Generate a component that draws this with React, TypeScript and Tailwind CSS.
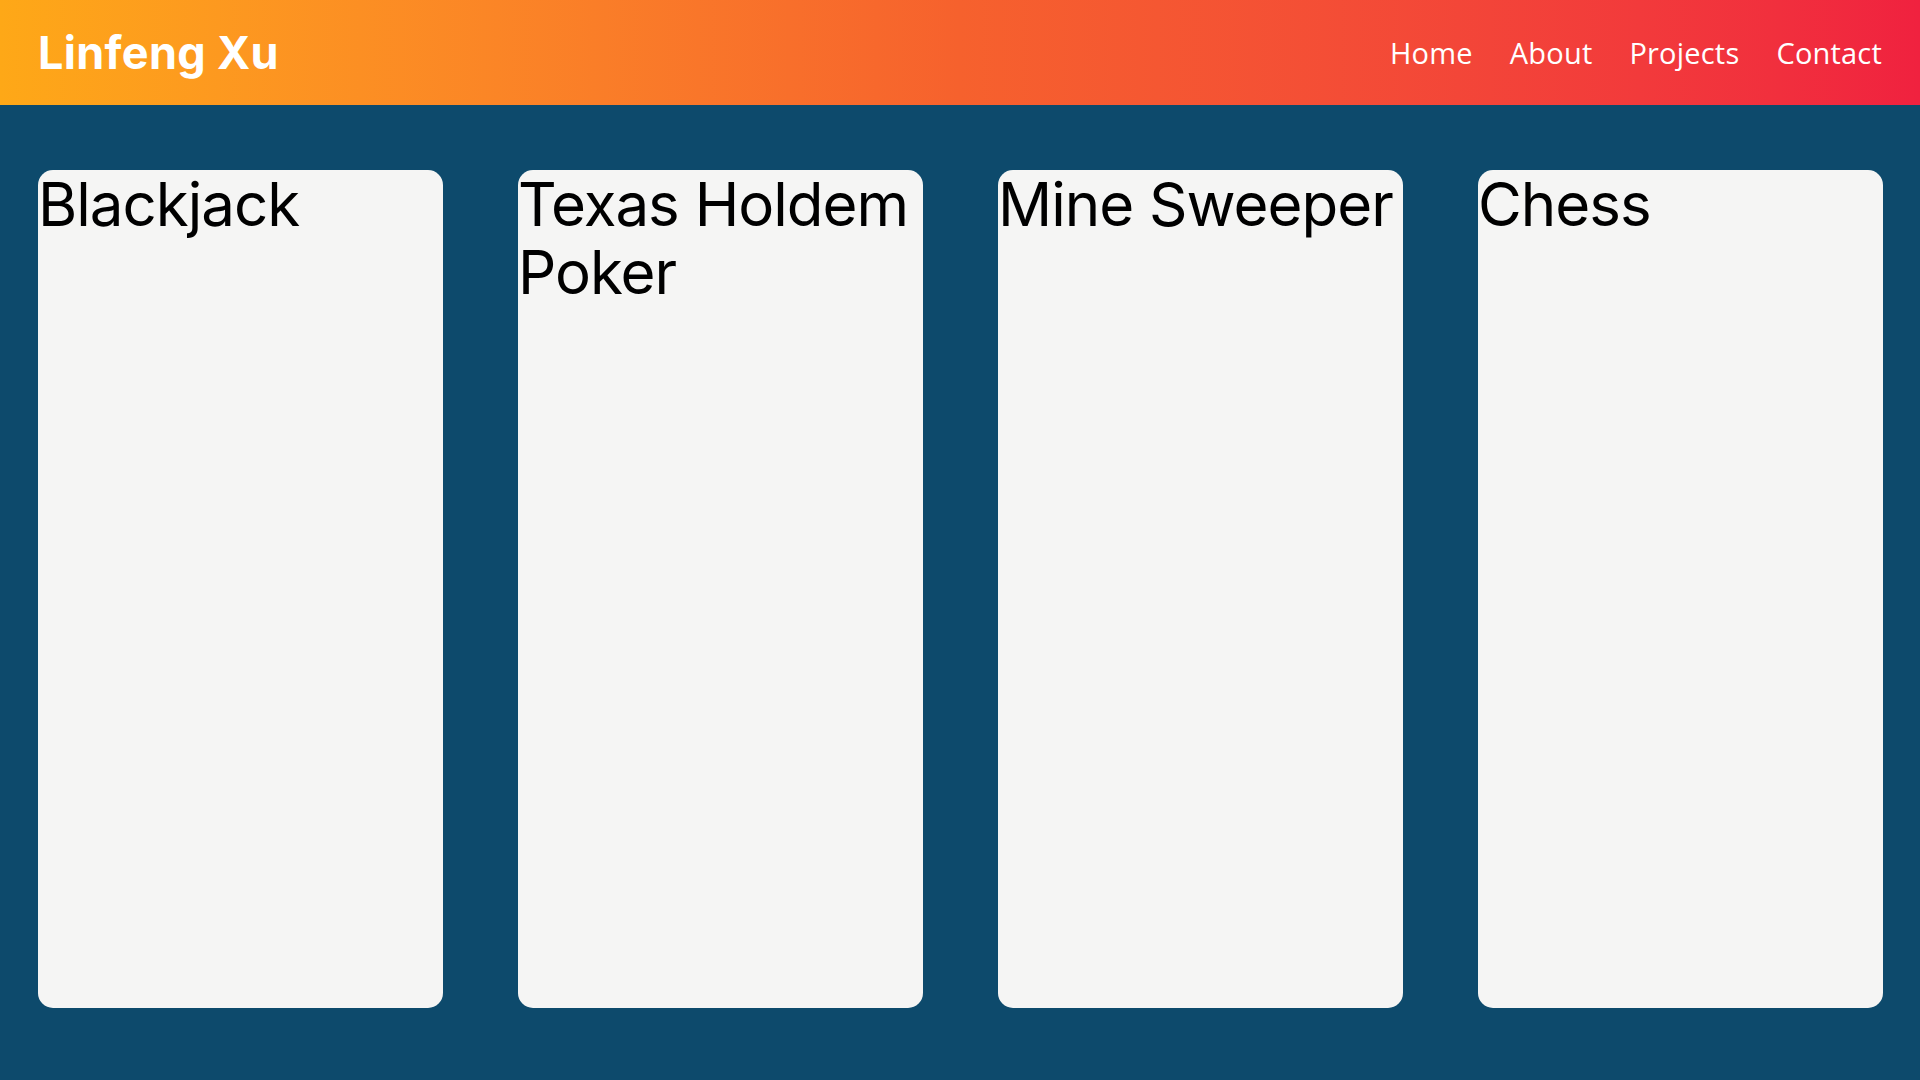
import React from 'react';

const projects = ["Blackjack", "Texas Holdem Poker", "Mine Sweeper", "Chess"];
const links = ["Home", "About", "Projects", "Contact"];

export default function App() {
    return (
        <div className="min-h-screen bg-[#0d4a6c]">
            {/* Header */}
            <header className="h-[105px] flex items-center justify-between pl-[38px] pr-[38px] bg-gradient-to-r from-[#fea817] via-[#f6612d] to-[#f0213f]">
                <h1 className="text-white font-bold text-[45px] tracking-[0.3px] font-['Inter','Liberation_Sans',sans-serif]">
                    Linfeng Xu
                </h1>
                <nav className="flex items-center gap-[37px]">
                    {links.map((link) => (
                        <a
                            key={link}
                            href="#"
                            className="text-white text-[29px] tracking-[0.2px] font-['Open_Sans','Liberation_Sans',sans-serif]"
                        >
                            {link}
                        </a>
                    ))}
                </nav>
            </header>

            {/* Projects */}
            <main className="pt-[65px] pl-[38px] pr-[37px]">
                <div className="grid grid-cols-4 gap-[75px]">
                    {projects.map((name) => (
                        <div key={name} className="h-[838px] rounded-[15px] bg-[#f5f5f4]">
                            <h2 className="text-black text-[60px] leading-[68px] tracking-[-1px] font-['Inter','Liberation_Sans',sans-serif]">
                                {name}
                            </h2>
                        </div>
                    ))}
                </div>
            </main>
        </div>
    );
}
